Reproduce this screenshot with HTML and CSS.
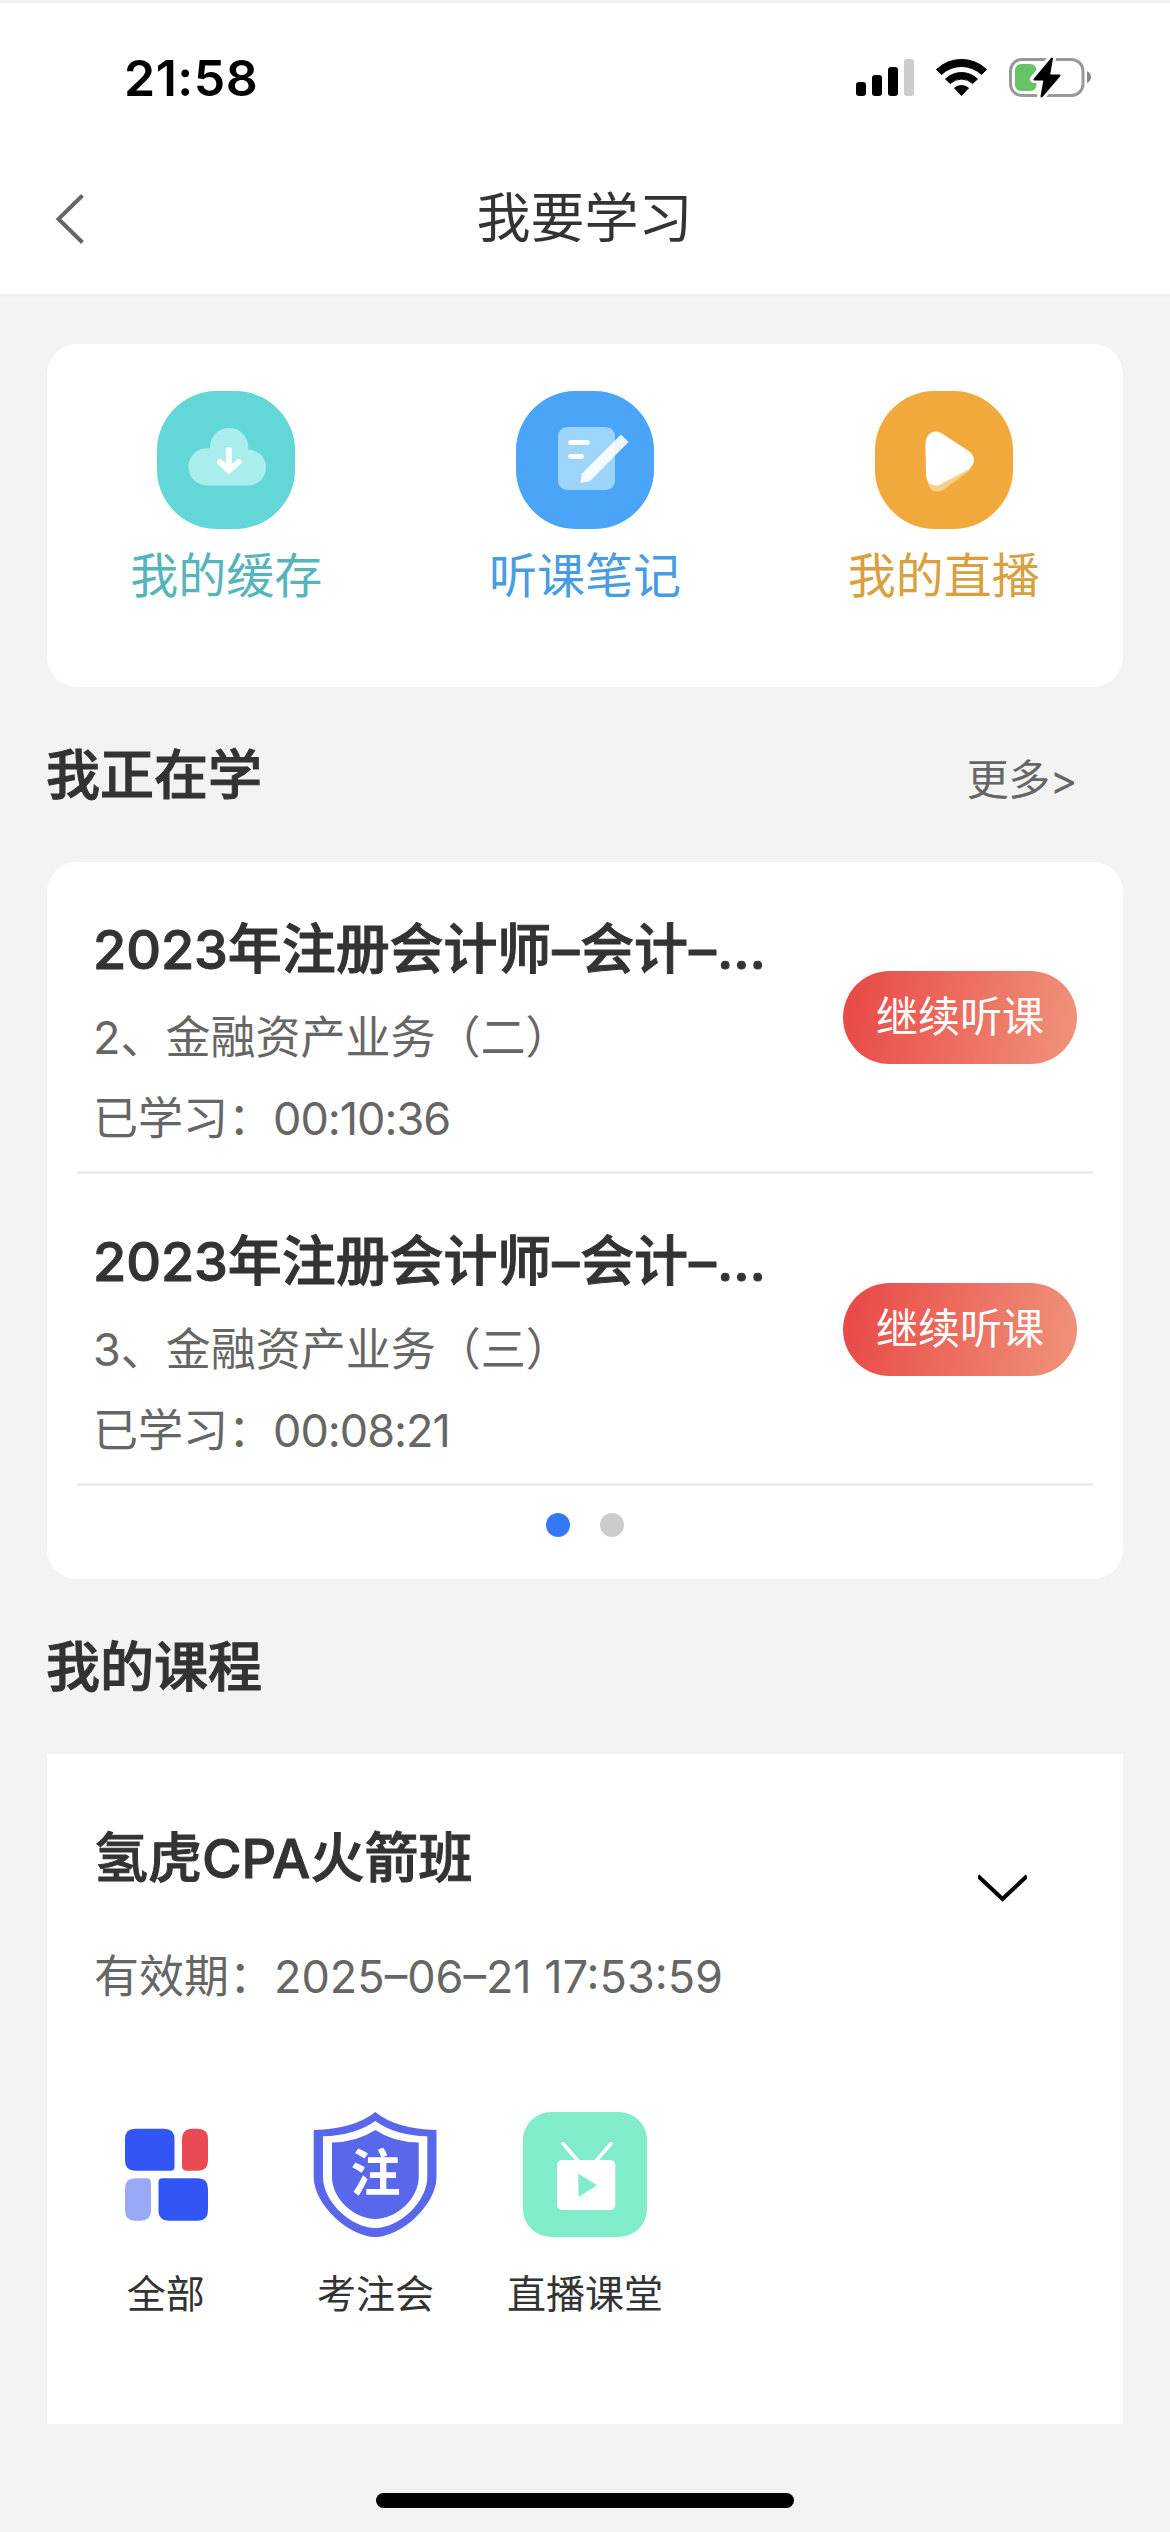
FILE: index.html
```html
<!DOCTYPE html>
<html lang="zh-CN">
<head>
<meta charset="utf-8">
<title>我要学习</title>
<link rel="stylesheet" href="styles.css">
</head>
<body>
<div class="screen">
  <header class="top">
    <div class="status">
      <span class="clock">21:58</span>
      <svg class="status-icons" width="240" height="44" viewBox="852 56 240 44">
        <rect x="856" y="82" width="10" height="14" rx="3"/>
        <rect x="872" y="75" width="10" height="21" rx="3"/>
        <rect x="888" y="67" width="10" height="29" rx="3"/>
        <rect x="904" y="59" width="10" height="37" rx="3" fill="#ccc"/>
        <path d="M936.5 69.5A36 36 0 0 1 986.500 69.500L981.500 74.500A29 29 0 0 0 941.500 74.500Z" stroke="#000" stroke-width="1" stroke-linejoin="round"/>
        <path d="M945.5 79A23 23 0 0 1 977.500 79L972.700 83.500A16.500 16.500 0 0 0 950.300 83.500Z" stroke="#000" stroke-width="1" stroke-linejoin="round"/>
        <path d="M954.500 88A11.500 11.500 0 0 1 968.500 88L961.500 95.500Z" stroke="#000" stroke-width="1" stroke-linejoin="round"/>
        <rect x="1010.500" y="59.500" width="72.500" height="36" rx="11.500" fill="none" stroke="#999" stroke-width="3"/>
        <path d="M1087 71Q1091 73 1091 77T1087 83Z" fill="#888"/>
        <rect x="1015" y="64" width="21.500" height="27" rx="6" fill="#66c466"/>
        <path d="M1052 58L1034 79H1044.500L1041 97L1059.500 75.500H1049.500Z" fill="#fff" stroke="#fff" stroke-width="8" stroke-linejoin="round"/>
        <path d="M1052 58.500L1034.500 79.500H1044.500L1041.500 96.500L1059.500 75.500H1049Z" stroke="#000" stroke-width="2" stroke-linejoin="round"/>
      </svg>
    </div>
    <div class="nav">
      <svg class="back" width="30" height="52" viewBox="0 0 30 52"><path d="M27.500 2.500L3.500 26L27.500 49.500" fill="none" stroke="#666" stroke-width="4"/></svg>
      <h1>我要学习</h1>
    </div>
  </header>

  <main class="content">
    <section class="card shortcuts">
      <a class="shortcut cache">
        <svg width="138" height="138" viewBox="0 0 138 138">
          <path fill="#63d6d7" d="M59 0H79C111 0 138 27 138 59V79C138 111 111 138 79 138H59C27 138 0 111 0 79V59C0 27 27 0 59 0Z"/>
          <path fill="#a9edec" d="M50 94.500A18.500 18.500 0 0 1 50 57.200H53V56A19 19 0 0 1 91.200 56V58.500A18 18 0 0 1 91 94.500Z"/>
          <path d="M71.800 59V79M63 71L71.800 79.500L81.500 71" fill="none" stroke="#fff" stroke-width="6" stroke-linecap="round" stroke-linejoin="round"/>
        </svg>
        <span>我的缓存</span>
      </a>
      <a class="shortcut notes">
        <svg width="138" height="138" viewBox="0 0 138 138">
          <path fill="#4aa4f8" d="M59 0H79C111 0 138 27 138 59V79C138 111 111 138 79 138H59C27 138 0 111 0 79V59C0 27 27 0 59 0Z"/>
          <rect x="42" y="36" width="57" height="63" rx="9" fill="#9dd4fa"/>
          <rect x="52.300" y="49" width="21.500" height="5" rx="2.500" fill="#fff"/>
          <rect x="52.300" y="63" width="15.500" height="5" rx="2.500" fill="#fff"/>
          <path fill="#fff" fill-opacity=".9" d="M105 43.500L112.500 51L75 89Q74 90 72 90.500L64.300 92L66 82.500Z"/>
        </svg>
        <span>听课笔记</span>
      </a>
      <a class="shortcut live">
        <svg width="138" height="138" viewBox="0 0 138 138">
          <path fill="#f2a93c" d="M59 0H79C111 0 138 27 138 59V79C138 111 111 138 79 138H59C27 138 0 111 0 79V59C0 27 27 0 59 0Z"/>
          <path fill="#f7d088" d="M50 55L53 93Q57 104 68 99L94 80L98 72Z"/>
          <path fill="#fff" d="M50.500 52C51 42 60 37.500 67 42.500L93 59.500C101 65 101 73 93.500 78.500L67 92.500C61 97 51.500 94 51 84Z"/>
        </svg>
        <span>我的直播</span>
      </a>
    </section>

    <div class="section-head">
      <h2>我正在学</h2>
      <a class="more">更多&gt;</a>
    </div>

    <section class="card learning">
      <article class="lesson">
        <div class="lesson-text">
          <h3>2023年注册会计师<span class="dash">–</span>会计<span class="dash">–</span>...</h3>
          <p>2、金融资产业务（二）</p>
          <p class="time">已学习：<span class="clock-value">00:10:36</span></p>
        </div>
        <button class="resume">继续听课</button>
      </article>
      <article class="lesson">
        <div class="lesson-text">
          <h3>2023年注册会计师<span class="dash">–</span>会计<span class="dash">–</span>...</h3>
          <p>3、金融资产业务（三）</p>
          <p class="time">已学习：<span class="clock-value">00:08:21</span></p>
        </div>
        <button class="resume">继续听课</button>
      </article>
      <div class="dots"><i class="active"></i><i></i></div>
    </section>

    <div class="section-head">
      <h2>我的课程</h2>
    </div>

    <section class="course">
      <div class="course-head">
        <div class="course-text">
          <h3>氢虎CPA火箭班</h3>
          <p>有效期：2025–06–21 17:53:59</p>
        </div>
        <svg class="expand" width="49" height="28" viewBox="0 0 49 28"><path d="M0 2L24.500 25L49 2" fill="none" stroke="#000" stroke-width="4"/></svg>
      </div>
      <div class="subjects">
        <a class="subject">
          <svg width="124" height="125" viewBox="0 0 124 125">
            <path fill="#3355f5" d="M31 16.700H60Q70.500 16.700 70.500 27V55Q70.500 58.700 67 58.700H31Q21 58.700 21 48.500V27Q21 16.700 31 16.700Z"/>
            <path fill="#ea4a53" d="M88 16.700H94Q104 16.700 104 27V48.500Q104 58.700 94 58.700H83Q78 58.700 78 54V28Q78 16.700 88 16.700Z"/>
            <path fill="#99a9f8" d="M31 66.300H43Q47 66.300 47 71V98Q47 108.700 37 108.700H31Q21 108.700 21 98V77Q21 66.300 31 66.300Z"/>
            <path fill="#3355f5" d="M58 66.300H94Q104 66.300 104 77V98Q104 108.700 94 108.700H65Q54.500 108.700 54.500 98V70Q54.500 66.300 58 66.300Z"/>
          </svg>
          <span>全部</span>
        </a>
        <a class="subject">
          <svg width="124" height="125" viewBox="0 0 124 125">
            <path fill="#5968ea" d="M62.300 0Q83 17 123.500 18V65C123.500 93 88 125 62.300 125S.7 93 .7 65V18Q41 17 62.300 0Z"/>
            <path fill="#fff" d="M62.300 9Q82 23.500 114.300 24.300V65C114.300 90 86 116 62.300 116S10 90 10 65V24.300Q42 23.500 62.300 9Z"/>
            <path fill="#5968ea" d="M62.300 18Q80 30 105.700 30.500V65C105.700 87 83 107 62.300 107S19 87 19 65V30.500Q44 30 62.300 18Z"/>
            <text class="badge-char" x="62.500" y="79" text-anchor="middle">注</text>
          </svg>
          <span>考注会</span>
        </a>
        <a class="subject">
          <svg width="124" height="125" viewBox="0 0 124 125">
            <rect width="124" height="125" rx="28" fill="#80ecc9"/>
            <rect x="34" y="48" width="58.300" height="50" rx="5" fill="#fff"/>
            <path d="M40 31.500L55 49M88 31.500L73 49" stroke="#fff" stroke-width="3.500" stroke-linecap="round"/>
            <path fill="#80ecc9" d="M55.300 61.500L74 73.200L55.300 85Z"/>
          </svg>
          <span>直播课堂</span>
        </a>
      </div>
    </section>
  </main>
  <div class="home-bar"></div>
</div>
</body>
</html>
```
FILE: styles.css
```css
* { box-sizing: border-box; margin: 0; padding: 0; }

body {
  width: 1170px;
  background: #f3f3f3;
  color: #333;
  font-family: Inter, "Noto Sans CJK SC", sans-serif;
  font-weight: 400;
}

svg { display: block; }

.screen {
  display: flex;
  flex-direction: column;
  height: 2532px;
}

.top {
  height: 297px;
  background: #fff;
  border-top: 3px solid #efefef;
  border-bottom: 3px solid #efefef;
}

.status {
  display: flex;
  justify-content: space-between;
  height: 138px;
  padding: 53px 78px 0 124px;
}

.clock {
  color: #000;
  font-size: 50px;
  font-weight: 600;
  letter-spacing: 0.5px;
  line-height: 44px;
}

.nav {
  display: grid;
  grid-template-columns: 1fr auto 1fr;
  align-items: center;
  height: 155px;
  padding: 0 56px 0 55px;
}

.nav h1 {
  font-size: 54px;
  font-weight: 400;
  line-height: 64px;
}

.content { padding: 47px 47px 0; }

.card {
  background: #fff;
  border-radius: 30px;
}

.shortcuts {
  display: grid;
  grid-template-columns: repeat(3, 1fr);
  height: 343px;
  padding-top: 47px;
}

.shortcut {
  display: flex;
  flex-direction: column;
  align-items: center;
  gap: 17px;
  font-size: 48px;
  line-height: 60px;
}

.cache { color: #55b5ba; }
.notes { color: #489de0; }
.live { color: #d9a040; }

.section-head {
  display: flex;
  justify-content: space-between;
  align-items: center;
  height: 175px;
  padding: 2px 46px 0 0;
}

h2, h3 {
  font-size: 54px;
  font-weight: 500;
  line-height: 64px;
  -webkit-text-stroke: 1px #333;
}

h2 { margin-left: -1px; }

.more {
  margin-top: 8px;
  color: #666;
  font-size: 42px;
  letter-spacing: -0.5px;
  line-height: 50px;
}

.learning {
  height: 717px;
  padding: 0 30px;
}

.lesson {
  display: flex;
  justify-content: space-between;
  align-items: flex-start;
  height: 312px;
  padding: 56px 16px 0;
  border-bottom: 3px solid #eee;
}

.lesson h3 {
  letter-spacing: -0.1px;
  white-space: nowrap;
}

.dash { padding: 0 1px; }

.lesson p {
  margin-top: 29px;
  color: #666;
  font-size: 45px;
  line-height: 54px;
}

.lesson .time { margin-top: 27px; }

.clock-value { letter-spacing: -1px; }

.resume {
  width: 234px;
  height: 93px;
  margin-top: 53px;
  padding-bottom: 2px;
  border: 0;
  border-radius: 47px;
  background: linear-gradient(100deg, #e84745, #f0947b);
  color: #fff;
  font: inherit;
  font-size: 42px;
  line-height: 50px;
}

.dots {
  display: flex;
  justify-content: center;
  gap: 30px;
  padding-top: 27px;
}

.dots i {
  width: 24px;
  height: 24px;
  border-radius: 50%;
  background: #ccc;
}

.dots .active { background: #3478f6; }

.course {
  height: 670px;
  padding: 70px 14px 0;
  background: #fff;
}

.course-head {
  display: flex;
  justify-content: space-between;
  height: 288px;
  padding: 0 82px 0 33px;
}

.course h3 { margin-top: 3px; }

.course p {
  margin-top: 59px;
  color: #666;
  font-size: 45px;
  line-height: 54px;
}

.expand { margin-top: 50px; }

.subjects {
  display: grid;
  grid-template-columns: repeat(5, 1fr);
}

.subject {
  display: flex;
  flex-direction: column;
  align-items: center;
  gap: 33px;
  font-size: 39px;
  line-height: 48px;
}

.badge-char {
  fill: #fff;
  font-family: "Noto Sans CJK SC", sans-serif;
  font-size: 50px;
  font-weight: 700;
}

.home-bar {
  width: 418px;
  height: 15px;
  margin: auto auto 24px;
  border-radius: 8px;
  background: #000;
}
```
